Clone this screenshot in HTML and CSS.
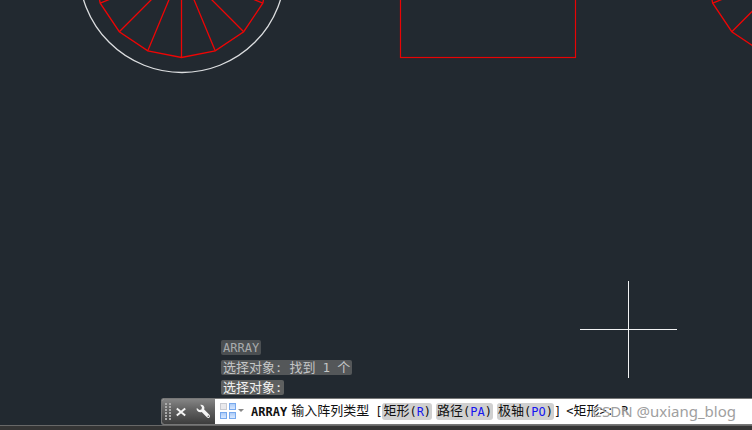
FILE: index.html
```
<!DOCTYPE html>
<html lang="zh-CN">
<head>
<meta charset="utf-8">
<title>ARRAY</title>
<link rel="stylesheet" href="styles.css">
</head>
<body>
<main class="workspace">
  <svg class="drawing" aria-hidden="true">
    <defs>
      <g id="wheel" fill="none" stroke="#ee0505" stroke-width="1.3">
        <path d="M-88 0 L-81.3 33.7 L-62.2 62.2 L-33.7 81.3 L0 88 L33.7 81.3 L62.2 62.2 L81.3 33.7 L88 0"/>
        <path d="M0 0 L-81.3 33.7 M0 0 L-62.2 62.2 M0 0 L-33.7 81.3 M0 0 V88 M0 0 L33.7 81.3 M0 0 L62.2 62.2 M0 0 L81.3 33.7"/>
      </g>
    </defs>
    <circle cx="182" cy="-30.5" r="103" fill="none" stroke="#dcdee0" stroke-width="1.3"/>
    <use href="#wheel" x="181.500" y="-30.500"/>
    <rect x="400.500" y="-20.500" width="175" height="78" fill="none" stroke="#e80404" stroke-width="1.2"/>
    <use href="#wheel" x="794" y="-30.500"/>
    <path d="M580 329.5 H677 M628.5 281 V378" fill="none" stroke="#f2f3f4"/>
  </svg>
  <div class="history">
    <p class="entry entry-old"><span class="mono">ARRAY</span></p>
    <p class="entry entry-mid">选择对象<span class="mono">: </span>找到<span class="mono"> 1 </span>个</p>
    <p class="entry entry-new">选择对象<span class="mono">:</span></p>
  </div>
  <section class="command">
    <div class="tools">
      <svg class="grip" width="6" height="18" aria-hidden="true">
        <path d="M1 0 V18 M5 0 V18" stroke="#aaa" stroke-width="2" stroke-dasharray="2 1"/>
      </svg>
      <button class="tool" type="button" aria-label="关闭">
        <svg width="10" height="10" viewBox="0 0 10 10"><path d="M.8 1.500 L9.200 8.500 M9.200 1.500 L.8 8.500" stroke="#f4f4f4" stroke-width="2"/></svg>
      </button>
      <button class="tool" type="button" aria-label="自定义">
        <svg width="15" height="15" viewBox="0 0 15 15"><path d="M4.2 .8 Q7.8 .2 8.4 3.6 L8.2 5.6 L13.7 11.1 Q14.4 12.4 13.5 13.4 Q12.4 14.4 11.1 13.6 L5.7 8.1 Q2.4 9 .9 6.2 Q.3 4.8 .9 3.9 L3.3 6.1 L5.4 5.5 L6 3.4 Z" fill="#f5f5f5"/><circle cx="12.3" cy="12.3" r=".8" fill="#555"/></svg>
      </button>
    </div>
    <div class="prompt">
      <button class="recent" type="button" aria-label="最近使用的命令">
        <svg width="26" height="17" viewBox="0 0 26 17">
          <defs>
            <linearGradient id="cell" x2="0" y2="1"><stop stop-color="#a9caf8"/><stop offset="1" stop-color="#dceaff"/></linearGradient>
          </defs>
          <rect x=".5" y=".5" width="6" height="6" fill="#e9e9ec" stroke="#c9cbd2"/>
          <g fill="url(#cell)" stroke="#78a9ed">
            <rect x="9.500" y=".5" width="6" height="6"/>
            <rect x=".5" y="9.500" width="6" height="6"/>
            <rect x="9.500" y="9.500" width="6" height="6"/>
          </g>
          <path d="M18 6 H24 L21 9 Z" fill="#888"/>
        </svg>
      </button>
      <b class="mono name">ARRAY</b>
      <span class="ask">输入阵列类型</span>
      <span class="mono">[</span>
      <button class="option" type="button">矩形<span class="mono">(<i>R</i>)</span></button>
      <button class="option" type="button">路径<span class="mono">(<i>PA</i>)</span></button>
      <button class="option" type="button">极轴<span class="mono">(<i>PO</i>)</span></button>
      <span class="mono">]</span>
      <span class="default"><span class="mono">&lt;</span>矩形<span class="mono">&gt;: </span><span class="mono typed">R</span></span>
    </div>
    <span class="watermark">CSDN @uxiang_blog</span>
  </section>
</main>
<footer class="frame"></footer>
</body>
</html>
```
FILE: styles.css
```
* {
  box-sizing: border-box;
}

body {
  margin: 0;
  min-height: 100vh;
  display: flex;
  flex-direction: column;
  overflow: hidden;
  background: #222930;
  color: #111;
  font: 13px/16px "Liberation Mono", "Noto Sans CJK SC", monospace;
}

.workspace {
  position: relative;
  flex: 1;
  display: flex;
  flex-direction: column;
  justify-content: flex-end;
}

.drawing {
  position: absolute;
  inset: 0;
  width: 100%;
  height: 100%;
}

.mono {
  font-family: "DejaVu Sans Mono", "Liberation Mono", monospace;
  font-size: 12px;
  white-space: pre;
}

.history {
  position: relative;
  display: flex;
  flex-direction: column;
  align-items: flex-start;
  gap: 5px;
  padding: 0 0 3px 221px;
}

.entry {
  margin: 0;
  height: 15px;
  padding: 0 2px;
  border-radius: 2px;
  line-height: 16px;
  white-space: nowrap;
}

.entry-old {
  background: #4b4f52;
  color: #a8abad;
}

.entry-mid {
  background: #545759;
  color: #c4c6c7;
}

.entry-new {
  background: #5e6060;
  color: #f2f2f2;
}

.command {
  position: relative;
  display: flex;
  height: 27px;
  margin-left: 161px;
  border: 1px solid #777;
  border-right: 0;
  border-radius: 3px 0 0 3px;
  background: #fff;
}

.tools {
  display: flex;
  align-items: center;
  gap: 5px;
  width: 53px;
  padding-left: 3px;
  border-radius: 2px 0 0 2px;
  background: linear-gradient(#858585, #606060 45%, #3d3d3d);
}

button {
  display: flex;
  align-items: center;
  margin: 0;
  padding: 0;
  border: 0;
  background: none;
  color: inherit;
  font: inherit;
}

.tool + .tool {
  margin-left: 5px;
}

.prompt {
  display: flex;
  align-items: center;
  flex: 1;
  padding-left: 5px;
  white-space: nowrap;
}

.name {
  margin-left: 5px;
}

.ask {
  margin: 0 6px 0 4px;
}

.option {
  height: 17px;
  margin-right: 4px;
  padding: 0 1px;
  border-radius: 3px;
  background: #d0d0d0;
}

.option:last-of-type {
  margin-right: 0;
}

.option i {
  color: #1515f0;
  font-style: normal;
}

.default {
  margin-left: 5px;
}

.watermark {
  position: absolute;
  right: 16px;
  top: 2px;
  color: #a0a0a0;
  font: 15px/21px "Noto Sans", sans-serif;
  text-shadow: -1px 0 rgba(255, 255, 255, 0.6);
}

.frame {
  height: 5px;
  border-top: 1px solid #686868;
  background: #353535;
}
```
